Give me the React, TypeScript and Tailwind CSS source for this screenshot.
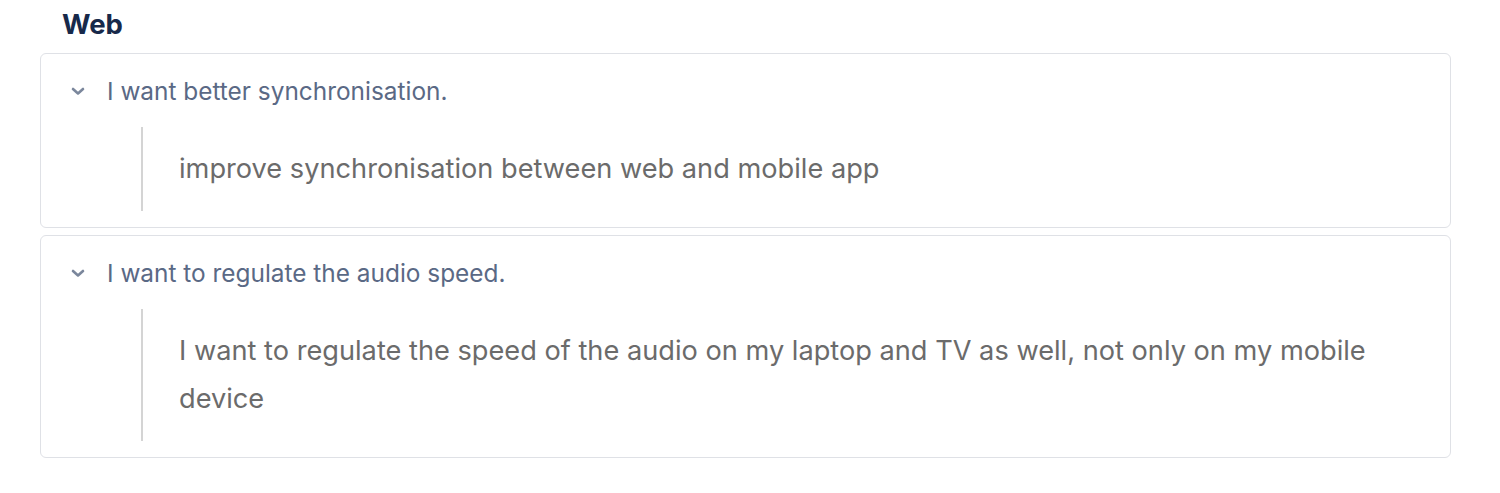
import React from 'react';

interface FaqItem {
  question: string;
  answer: string;
}

const items: FaqItem[] = [
  {
    question: 'I want better synchronisation.',
    answer: 'improve synchronisation between web and mobile app',
  },
  {
    question: 'I want to regulate the audio speed.',
    answer: 'I want to regulate the speed of the audio on my laptop and TV as well, not only on my mobile device',
  },
];

const Chevron: React.FC = () => (
  <svg width="16" height="16" viewBox="0 0 16 16" className="shrink-0 text-[#7b879c]">
    <path d="M3 6 L8 10.5 L13 6" fill="none" stroke="currentColor" strokeWidth="2.6" strokeLinecap="round" strokeLinejoin="round" />
  </svg>
);

const App: React.FC = () => {
  return (
    <div className="min-h-[493px] bg-white pl-[40px] pt-[7px]" style={{ fontFamily: 'Inter, "Liberation Sans", sans-serif' }}>
      <h2 className="pl-[22px] text-[27.5px] font-bold leading-[34px] text-[#17294a]">Web</h2>
      <div className="mt-[12px] flex w-[1411px] flex-col gap-[7px]">
        {items.map((item) => (
          <details key={item.question} open className="rounded-[6px] border border-[#dfe1e6] bg-white">
            <summary className="flex list-none items-center gap-[21px] pl-[29px] pt-[23px] text-[24.4px] leading-[28px] text-[#5a6985] [&::-webkit-details-marker]:hidden">
              <Chevron />
              <span>{item.question}</span>
            </summary>
            <blockquote className="mb-[16px] ml-[100px] mt-[22px] border-l-2 border-[#d4d4d4] py-[18px] pl-[36px] pr-[60px] text-[27.2px] leading-[48px] text-[#6b6b6b]">
              {item.answer}
            </blockquote>
          </details>
        ))}
      </div>
    </div>
  );
};

export default App;
